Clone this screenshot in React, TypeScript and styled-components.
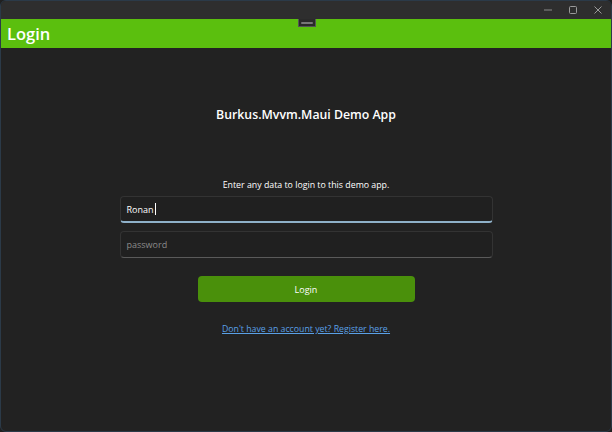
import React from "react";
import styled, { createGlobalStyle } from "styled-components";

const Global = createGlobalStyle`
  html, body { margin: 0; padding: 0; background: #202020; }
  body { font-family: "Open Sans", "Noto Sans", sans-serif; }
  * { box-sizing: border-box; }
`;

const Window = styled.div`
  width: 612px;
  height: 432px;
  display: flex;
  flex-direction: column;
  background: #222222;
  border: 1px solid #2b3a48;
  border-radius: 6px;
  overflow: hidden;
`;

const TitleBar = styled.div`
  height: 18px;
  background: #2e2e2e;
  display: flex;
  justify-content: flex-end;
  align-items: center;
  padding-right: 1px;
  flex-shrink: 0;
`;

const CtrlButton = styled.div`
  width: 25px;
  height: 18px;
  display: flex;
  align-items: center;
  justify-content: center;
`;

const NavBar = styled.div`
  position: relative;
  height: 29px;
  background: #5bbf0e;
  display: flex;
  align-items: center;
  padding-left: 6px;
  flex-shrink: 0;
`;

const NavTitle = styled.div`
  color: #ffffff;
  font-size: 16.5px;
  font-weight: 600;
`;

const DebugTab = styled.div`
  position: absolute;
  left: 297px;
  top: 0;
  width: 18px;
  height: 8px;
  background: #2a2a2a;
  border: 1px solid #555;
  border-top: none;
  display: flex;
  align-items: center;
  justify-content: center;
  &::after {
    content: "";
    width: 12px;
    height: 2px;
    background: #777;
    border-radius: 1px;
  }
`;

const Content = styled.div`
  flex: 1;
  display: flex;
  flex-direction: column;
  align-items: center;
  padding-top: 58px;
`;

const Heading = styled.div`
  color: #ffffff;
  font-size: 12.3px;
  line-height: 17px;
  font-weight: 600;
`;

const Prompt = styled.div`
  margin-top: 55px;
  color: #ffffff;
  font-size: 8.8px;
  line-height: 14px;
`;

const Entry = styled.div<{ $focused?: boolean }>`
  width: 373px;
  height: 27px;
  margin-top: ${(p) => (p.$focused ? "4px" : "8px")};
  background: #202020;
  border: 1px solid #333;
  border-bottom: ${(p) => (p.$focused ? "2px solid #8fb1c9" : "1px solid #5a5a5a")};
  border-radius: 4px;
  display: flex;
  align-items: center;
  padding-left: 6px;
  font-size: 9px;
  color: ${(p) => (p.$focused ? "#ffffff" : "#8a8a8a")};
`;

const Caret = styled.span`
  display: inline-block;
  width: 1px;
  height: 12px;
  background: #fff;
  margin-left: 1px;
`;

const LoginButton = styled.div`
  margin-top: 18px;
  width: 217px;
  height: 26px;
  background: #4a900b;
  border-radius: 4px;
  display: flex;
  align-items: center;
  justify-content: center;
  color: #ffffff;
  font-size: 9px;
`;

const RegisterLink = styled.a`
  margin-top: 21px;
  color: #5aa0e6;
  font-size: 8.75px;
  line-height: 12px;
  text-decoration: underline;
  cursor: pointer;
`;

export default function App() {
  return (
    <>
      <Global />
      <Window>
        <TitleBar>
          <CtrlButton>
            <svg width="10" height="10" viewBox="0 0 10 10">
              <line x1="1" y1="5" x2="9" y2="5" stroke="#8a8a8a" strokeWidth="1" />
            </svg>
          </CtrlButton>
          <CtrlButton>
            <svg width="10" height="10" viewBox="0 0 10 10">
              <rect x="1.5" y="1.5" width="7" height="7" rx="1" fill="none" stroke="#9a9a9a" strokeWidth="1" />
            </svg>
          </CtrlButton>
          <CtrlButton>
            <svg width="10" height="10" viewBox="0 0 10 10">
              <path d="M1.5 1.5 L8.5 8.5 M8.5 1.5 L1.5 8.5" stroke="#9a9a9a" strokeWidth="1" />
            </svg>
          </CtrlButton>
        </TitleBar>
        <NavBar>
          <DebugTab />
          <NavTitle>Login</NavTitle>
        </NavBar>
        <Content>
          <Heading>Burkus.Mvvm.Maui Demo App</Heading>
          <Prompt>Enter any data to login to this demo app.</Prompt>
          <Entry $focused>
            Ronan<Caret />
          </Entry>
          <Entry>password</Entry>
          <LoginButton>Login</LoginButton>
          <RegisterLink>Don't have an account yet? Register here.</RegisterLink>
        </Content>
      </Window>
    </>
  );
}
